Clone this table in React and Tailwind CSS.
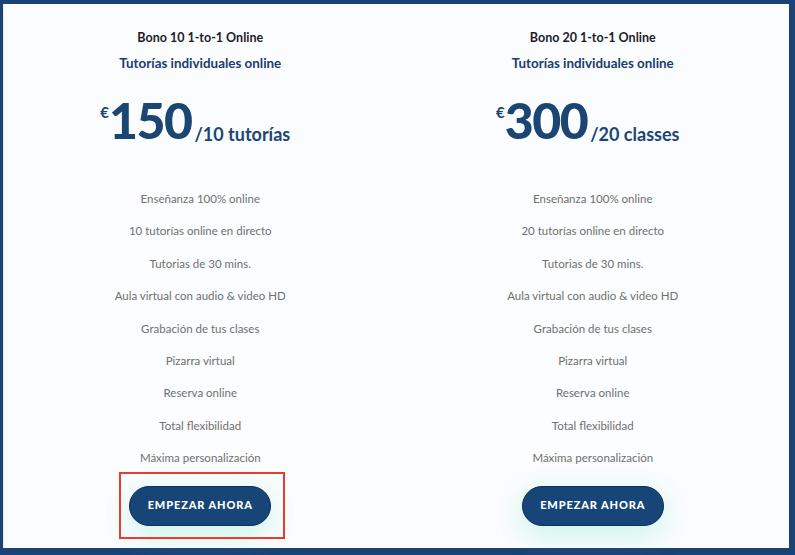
const plans = [
  { title: 'Bono 10 1-to-1 Online', price: '150', unit: '/10 tutorías', count: '10', selected: true },
  { title: 'Bono 20 1-to-1 Online', price: '300', unit: '/20 classes', count: '20', selected: false },
];

const features = (n) => [
  'Enseñanza 100% online',
  `${n} tutorías online en directo`,
  'Tutorias de 30 mins.',
  'Aula virtual con audio & video HD',
  'Grabación de tus clases',
  'Pizarra virtual',
  'Reserva online',
  'Total flexibilidad',
  'Máxima personalización',
];

function PlanColumn({ plan }) {
  return (
    <div className="flex flex-col items-center pt-[24px]">
      <h3 className="text-[12.5px] leading-5 font-bold text-[#1c1d2b]">{plan.title}</h3>
      <p className="mt-[5px] text-[13.4px] leading-5 font-bold text-[#1a3d72]">Tutorías individuales online</p>
      <div className="mt-[22px] flex items-baseline text-[#1b4674] h-[50px] -translate-x-[5px]">
        <span className="self-start text-[15px] font-bold leading-none mt-[10px]">€</span>
        <span className="text-[50px] font-black leading-none tracking-[-1.5px]">{plan.price}</span>
        <span className="text-[18px] font-bold leading-none ml-[3px] translate-y-[2px]">{plan.unit}</span>
      </div>
      <ul className="mt-[38px] flex flex-col items-center text-[11.5px] text-[#707070]">
        {features(plan.count).map((f) => (
          <li key={f} className="h-[32.4px] leading-[32.4px]">{f}</li>
        ))}
      </ul>
      <div className="relative mt-[11px]">
        <button className="w-[142px] h-[40px] rounded-full bg-[#184577] border border-[#0f2d5c] text-white text-[11px] font-black tracking-[0.08em] shadow-[0_8px_30px_rgba(64,224,190,0.28)]">
          EMPEZAR AHORA
        </button>
        {plan.selected && (
          <div className="absolute left-[-10px] right-[-14px] top-[-14px] bottom-[-13px] border-2 border-[#ec3b2e] pointer-events-none" />
        )}
      </div>
    </div>
  );
}

export default function App() {
  return (
    <div
      className="w-[795px] h-[555px] bg-[#1a4274] pt-[4px] pl-[3px] pr-[6px] pb-[7px]"
      style={{ fontFamily: 'Lato, "Open Sans", sans-serif' }}
    >
      <div className="w-full h-full bg-[#fbfcfd] border-l border-[#e9eef4] grid grid-cols-2">
        {plans.map((p) => <PlanColumn key={p.title} plan={p} />)}
      </div>
    </div>
  );
}
